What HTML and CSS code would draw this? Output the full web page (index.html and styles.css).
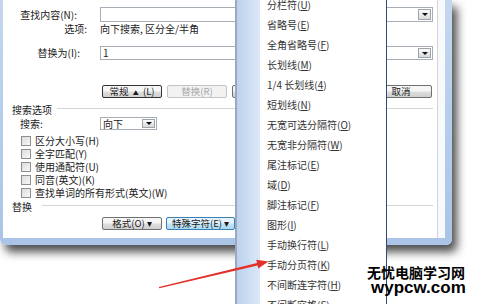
FILE: index.html
```html
<!DOCTYPE html>
<html lang="zh">
<head>
    <meta charset="UTF-8">
    <title>查找和替换</title>
    <link rel="stylesheet" href="styles.css">
</head>
<body>
<div class="stage">

    <!-- Find & replace dialog -->
    <div class="dialog">
        <div class="client">
            <div class="content">
                <div class="row find">
                    <span class="label lbl-find">查找内容(N):</span>
                    <div class="combo"><span class="drop"></span></div>
                </div>
                <div class="row opts">
                    <span class="label lbl-opts">选项:</span>
                    <span>向下搜索, 区分全/半角</span>
                </div>
                <div class="row replace">
                    <span class="label lbl-repl">替换为(I):</span>
                    <div class="combo"><span class="combo-text">1</span><span class="drop"></span></div>
                </div>
                <div class="row btns">
                    <span class="btn btn-default">常规&nbsp; <small>▲</small> &nbsp;(L)</span>
                    <span class="btn btn-off">替换(R)</span>
                    <span class="btn btn-hidden"></span>
                    <span class="btn btn-cancel">取消</span>
                </div>

                <div class="row sect">搜索选项</div>
                <div class="row search">
                    <span class="search-label">搜索:</span>
                    <div class="select"><span class="select-text">向下</span><span class="drop"></span></div>
                </div>
                <div class="checks">
                    <div class="check"><span class="box"></span>区分大小写(H)</div>
                    <div class="check"><span class="box"></span>全字匹配(Y)</div>
                    <div class="check"><span class="box"></span>使用通配符(U)</div>
                    <div class="check"><span class="box"></span>同音(英文)(K)</div>
                    <div class="check"><span class="box"></span>查找单词的所有形式(英文)(W)</div>
                </div>

                <div class="row sect sect-repl">替换</div>
                <div class="row btns-bottom">
                    <span class="btn">格式(O) ▾</span>
                    <span class="btn btn-active">特殊字符(E) ▾</span>
                </div>
            </div>
        </div>
    </div>

    <!-- Special characters menu -->
    <div class="menu">
        <div class="item">分栏符(<u>U</u>)</div>
        <div class="item">省略号(<u>E</u>)</div>
        <div class="item">全角省略号(<u>F</u>)</div>
        <div class="item">长划线(<u>M</u>)</div>
        <div class="item">1/4 长划线(<u>4</u>)</div>
        <div class="item">短划线(<u>N</u>)</div>
        <div class="item">无宽可选分隔符(<u>O</u>)</div>
        <div class="item">无宽非分隔符(<u>W</u>)</div>
        <div class="item">尾注标记(<u>E</u>)</div>
        <div class="item">域(<u>D</u>)</div>
        <div class="item">脚注标记(<u>F</u>)</div>
        <div class="item">图形(<u>I</u>)</div>
        <div class="item">手动换行符(<u>L</u>)</div>
        <div class="item">手动分页符(<u>K</u>)</div>
        <div class="item">不间断连字符(<u>H</u>)</div>
        <div class="item">不间断空格(<u>S</u>)</div>
    </div>

    <!-- red pointer -->
    <svg class="arrow" width="477" height="304" viewBox="0 0 477 304">
        <polygon points="158.9,287 257,262.9 256.3,259.8 268.5,261.6 258.3,268.4 257.6,265.6 159.2,288.2" fill="#e3312b"/>
    </svg>

    <div class="mark">
        <div class="mark-cn">无忧电脑学习网</div>
        <div class="mark-en">wypcw.com</div>
    </div>
</div>
</body>
</html>
```

FILE: styles.css
```css
body { margin: 0; background: #fff; font-family: "Noto Sans CJK SC", sans-serif; }
.stage { position: relative; width: 477px; height: 304px; overflow: hidden; background: #fff; }

/* dialog frame */
.dialog { width: 452px; box-sizing: border-box; padding: 0 7px 7px 3px; background: linear-gradient(to bottom, #c3d7ef, #a9c4e6); border-radius: 0 0 6px 6px; box-shadow: 5px 7px 10px rgba(0, 0, 0, 0.7); }
.client { background: #f7f9fc; padding-right: 7px; }
.content { height: 238px; box-sizing: border-box; border-right: 1px solid #d4d4d4; background: #fff; font-size: 10px; line-height: 12px; color: #1a1a1a; }

.row { display: flex; align-items: center; }
.label { width: 97px; flex: none; text-align: right; box-sizing: border-box; }
.lbl-find { padding-right: 23px; }
.lbl-opts { padding-right: 13px; }
.lbl-repl { padding-right: 20px; }

.find { padding-top: 7px; height: 15px; }
.opts { height: 14px; }
.replace { margin-top: 10px; height: 14px; }

.combo { width: 333px; height: 100%; box-sizing: border-box; border: 1px solid #a7adb5; display: flex; align-items: center; }
.combo-text { padding-left: 2px; flex: 1; }
.drop { width: 13px; height: calc(100% - 2px); margin: 1px 1px 1px auto; box-sizing: border-box; border: 1px solid #9ea4ac; background: linear-gradient(#fbfbfb, #dadada); display: flex; align-items: center; justify-content: center; }
.drop::after { content: ""; border-left: 3px solid transparent; border-right: 3px solid transparent; border-top: 3px solid #111; }

/* buttons */
.btns { margin-top: 25px; height: 13px; gap: 5px; padding-left: 99px; padding-right: 5px; }
.btn { width: 60px; height: 13px; flex: none; box-sizing: border-box; border: 1px solid #707070; border-radius: 2px; background: linear-gradient(#f6f6f6 45%, #dedede 55%, #d0d0d0); font-size: 9.5px; line-height: 11px; text-align: center; white-space: nowrap; }
.btn small { font-size: 6px; }
.btn-default { border-color: #333; }
.btn-off { color: #a8a8a8; border-color: #c4c4c4; background: #f2f2f2; }
.btn-cancel { margin-left: auto; width: 62px; }
.btn-active { width: 69px; border-color: #3c7fb1; background: linear-gradient(#e5f4fc 45%, #c4e5f6 55%, #a9d9f2); }

/* groups */
.sect { margin-top: 6px; height: 12px; padding-left: 9px; padding-right: 4px; }
.sect::after { content: ""; flex: 1; border-top: 1px solid #d5d5d5; margin: 0 0 3px 5px; }
.sect-repl { margin-top: 2px; }
.sect-repl::after { margin-left: 10px; }

.search { margin-top: 1px; height: 13px; padding-left: 17px; }
.search-label { width: 80px; flex: none; }
.select { width: 57px; height: 13px; box-sizing: border-box; border: 1px solid #a7adb5; display: flex; align-items: center; }
.select-text { padding-left: 2px; }

.checks { margin-top: 4px; }
.check { height: 13px; line-height: 13px; display: flex; align-items: center; padding-left: 18px; gap: 4px; }
.box { width: 10px; height: 10px; box-sizing: border-box; border: 1px solid #8e8f8f; background: linear-gradient(135deg, #dcdcdc, #f8f8f8); }

.btns-bottom { margin-top: 4px; height: 13px; gap: 4px; padding-left: 99px; }

/* menu */
.menu { position: absolute; left: 235px; top: -5px; bottom: -20px; width: 152px; box-sizing: border-box; border-left: 2px solid #9aa9bd; border-right: 1px solid #2f4a78; background: linear-gradient(to right, #bcd2ee, #dce8f8 23px, #fff 23px); font-size: 10px; color: #333; }
.item { height: 20px; line-height: 20px; padding-left: 30px; white-space: nowrap; }
.item u { text-underline-offset: 1px; }

.arrow { position: absolute; left: 0; top: 0; }

.mark { position: absolute; left: 367px; top: 265px; color: #000; }
.mark-cn { font-size: 14px; line-height: 15px; font-weight: bold; white-space: nowrap; }
.mark-en { font: bold 17px/16px "Liberation Sans", sans-serif; margin-left: 4px; }
```
